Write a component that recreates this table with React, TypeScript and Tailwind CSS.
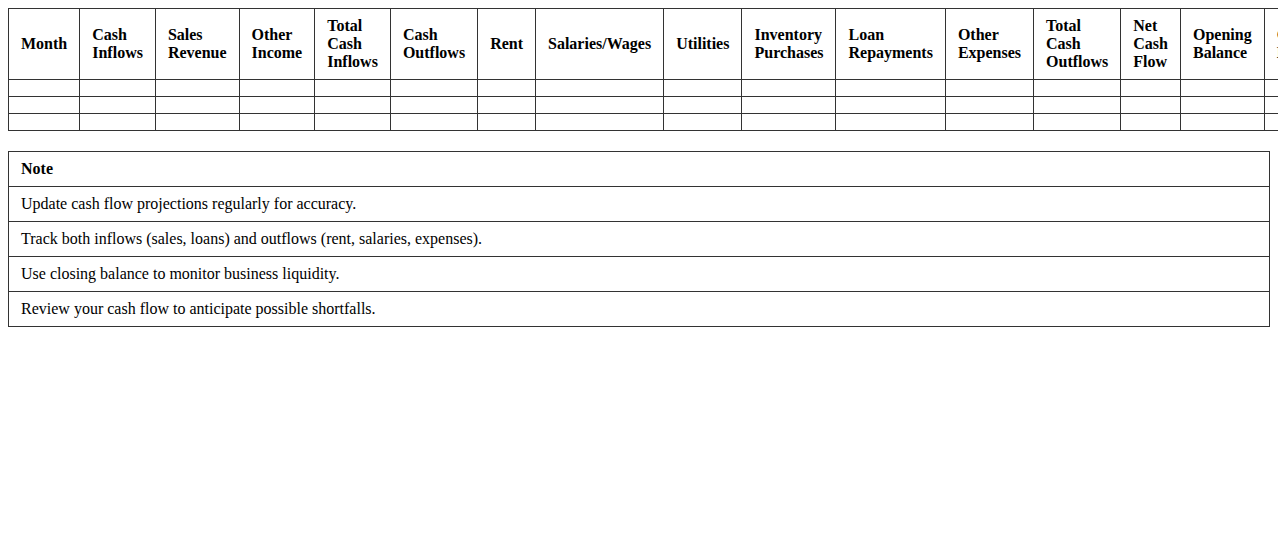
import React from "react";

const headers = [
  "Month",
  "Cash Inflows",
  "Sales Revenue",
  "Other Income",
  "Total Cash Inflows",
  "Cash Outflows",
  "Rent",
  "Salaries/Wages",
  "Utilities",
  "Inventory Purchases",
  "Loan Repayments",
  "Other Expenses",
  "Total Cash Outflows",
  "Net Cash Flow",
  "Opening Balance",
  "Closing Balance",
];

const notes = [
  "Update cash flow projections regularly for accuracy.",
  "Track both inflows (sales, loans) and outflows (rent, salaries, expenses).",
  "Use closing balance to monitor business liquidity.",
  "Review your cash flow to anticipate possible shortfalls.",
];

export default function App() {
  return (
    <div
      className="bg-white text-black p-2 min-h-[535px] overflow-hidden text-base"
      style={{ fontFamily: '"Liberation Serif", "Times New Roman", serif' }}
    >
      <div className="mb-5">
        <table className="border-collapse">
          <thead>
            <tr>
              {headers.map((h) => (
                <th
                  key={h}
                  className="border border-[#333] px-3 py-2 text-left font-bold align-middle leading-[18px]"
                >
                  {h}
                </th>
              ))}
            </tr>
          </thead>
          <tbody>
            {[0, 1, 2].map((r) => (
              <tr key={r}>
                {headers.map((h) => (
                  <td key={h} className="border border-[#333] px-3 py-2 leading-[18px]"></td>
                ))}
              </tr>
            ))}
          </tbody>
        </table>
      </div>
      <table className="w-full border-collapse">
        <thead>
          <tr>
            <th className="border border-[#333] px-3 py-2 text-left font-bold leading-[18px]">Note</th>
          </tr>
        </thead>
        <tbody>
          {notes.map((n) => (
            <tr key={n}>
              <td className="border border-[#333] px-3 py-2 leading-[18px]">{n}</td>
            </tr>
          ))}
        </tbody>
      </table>
    </div>
  );
}
